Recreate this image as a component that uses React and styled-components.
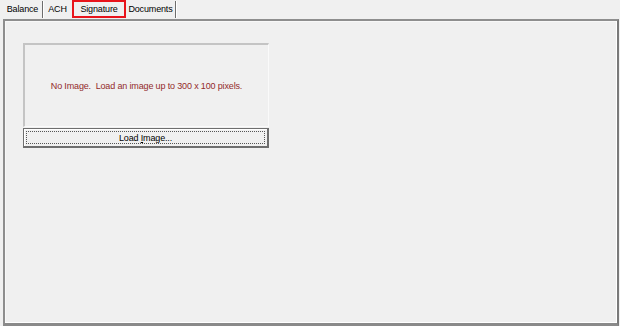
import React from 'react';
import styled, { createGlobalStyle } from 'styled-components';

const GlobalStyle = createGlobalStyle`
	html, body {
		margin: 0;
		padding: 0;
		background: #f0f0f0;
	}
	body {
		font-family: 'Liberation Sans', Arial, sans-serif;
		font-size: 9px;
		letter-spacing: -0.15px;
		color: #000;
	}
`;

const Window = styled.div`
	width: 620px;
	height: 326px;
	display: flex;
	flex-direction: column;
	background: #f0f0f0;
	overflow: hidden;
`;

const TabStrip = styled.div`
	display: flex;
	align-items: flex-start;
	height: 19px;
	padding-left: 3px;
	box-sizing: border-box;
`;

const Tab = styled.div`
	display: flex;
	align-items: center;
	justify-content: center;
	box-sizing: border-box;
	width: ${(p) => p.$w}px;
	height: ${(p) => (p.$active ? '18px' : '17px')};
	margin-top: ${(p) => (p.$active ? '0' : '1px')};
	padding-bottom: 1px;
	border-right: ${(p) => (p.$sep ? '1px solid #6d6d6d' : 'none')};
	box-shadow: ${(p) => (p.$sep ? '1px 0 0 #ffffff' : 'none')};
	outline: ${(p) => (p.$active ? '2px solid #e8141b' : 'none')};
	outline-offset: -2px;
	white-space: nowrap;
`;

const Pane = styled.div`
	flex: 1;
	margin-left: 3px;
	margin-right: 1px;
	box-sizing: border-box;
	border-top: 2px solid #8e8e8e;
	border-left: 2px solid #8e8e8e;
	border-right: 2px solid #7a7a7a;
	border-bottom: 3px solid #8a8a8a;
	box-shadow: inset -1px -1px 0 #ffffff, inset 1px 1px 0 #f8f8f8;
	padding: 22px 0 0 18px;
`;

const SignatureBlock = styled.div`
	width: 246px;
	display: flex;
	flex-direction: column;
	gap: 1px;
`;

const ImageFrame = styled.div`
	height: 84px;
	box-sizing: border-box;
	border-top: 2px solid #c4c4c4;
	border-left: 2px solid #c4c4c4;
	border-right: 1px solid #fafafa;
	border-bottom: 1px solid #fafafa;
	display: flex;
	align-items: center;
	justify-content: center;
	color: #932b2b;
	white-space: pre;
`;

const LoadButton = styled.button`
	height: 20px;
	box-sizing: border-box;
	background: #f0f0f0;
	border: 1px solid #6e6e6e;
	border-right-width: 2px;
	border-bottom-width: 2px;
	box-shadow: inset 1px 1px 0 #ffffff;
	padding: 2px;
	font-family: inherit;
	font-size: 9px;
	letter-spacing: inherit;
	color: #000;
	cursor: default;
`;

const FocusRect = styled.span`
	display: flex;
	align-items: center;
	justify-content: center;
	height: 100%;
	box-sizing: border-box;
	border: 1px dotted #555;
	padding-top: 1px;
`;

export default function App() {
	return (
		<>
			<GlobalStyle />
			<Window>
				<TabStrip>
					<Tab $sep $w={40}>Balance</Tab>
					<Tab $w={29}>ACH</Tab>
					<Tab $active $w={54}>Signature</Tab>
					<Tab $sep $w={50}>Documents</Tab>
				</TabStrip>
				<Pane>
					<SignatureBlock>
						<ImageFrame>No Image.  Load an image up to 300 x 100 pixels.</ImageFrame>
						<LoadButton>
							<FocusRect>
								Load&nbsp;<u>I</u>mage...
							</FocusRect>
						</LoadButton>
					</SignatureBlock>
				</Pane>
			</Window>
		</>
	);
}
